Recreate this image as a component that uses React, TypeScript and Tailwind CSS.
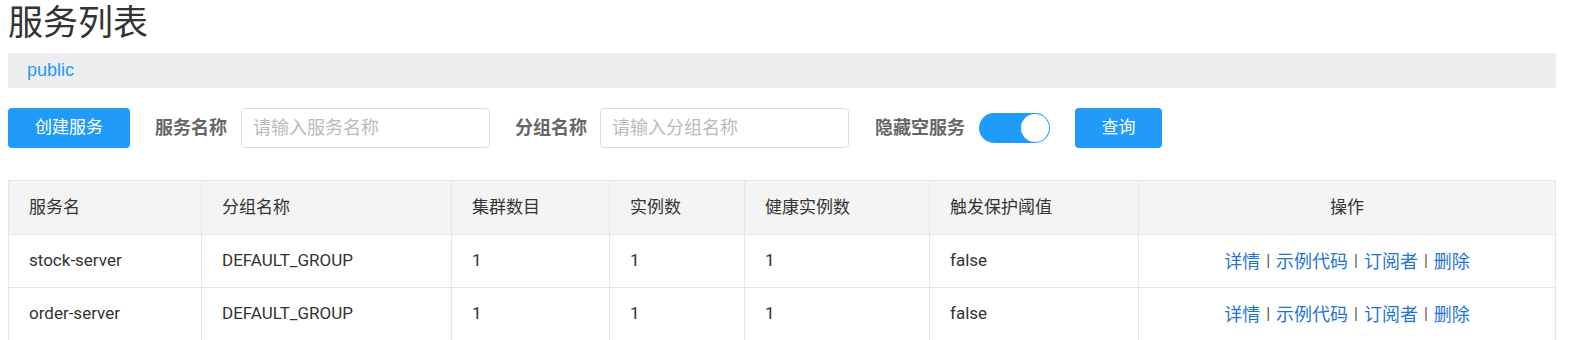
import React from "react";

const cjk = { fontFamily: '"Liberation Sans", "Noto Sans CJK SC", sans-serif' };
const cell = { fontFamily: 'Roboto, "Noto Sans CJK SC", sans-serif' };

const rows = [
    { name: "stock-server", group: "DEFAULT_GROUP", clusters: "1", instances: "1", healthy: "1", threshold: "false" },
    { name: "order-server", group: "DEFAULT_GROUP", clusters: "1", instances: "1", healthy: "1", threshold: "false" },
];

const cols = ["服务名", "分组名称", "集群数目", "实例数", "健康实例数", "触发保护阈值"];
const widths = ["w-[193px]", "w-[250px]", "w-[158px]", "w-[135px]", "w-[185px]", "w-[209px]", "w-[417px]"];

function Actions() {
    const links = ["详情", "示例代码", "订阅者", "删除"];
    return <div className="flex justify-center items-center text-[18px]">
        {links.map((l, i) => (
            <span key={l} className="flex items-center">
                {i > 0 && <span className="px-[6px] text-[#555] text-[16px]">|</span>}
                <a className="text-[#1f75d6] cursor-pointer">{l}</a>
            </span>
        ))}
    </div>
}

export default function App() {
    return <div className="px-2 bg-white text-[#333]" style={cjk}>
        <h1 className="text-[35px] leading-[44px] font-normal pt-[1px] mb-[8px]">服务列表</h1>
        <div className="w-[1548px] h-[35px] bg-[#eee] flex items-center pl-[19px] text-[18px] text-[#209bfa]">
            <span>public</span>
        </div>

        <div className="mt-[20px] h-10 flex items-center">
            <button className="h-10 w-[122px] rounded bg-[#209bfa] text-white text-[17px]">创建服务</button>
            <span className="ml-[25px] font-bold text-[18px] text-[#666]">服务名称</span>
            <input
                className="ml-[14px] h-10 w-[249px] rounded border border-[#ddd] px-[11px] text-[18px] outline-none placeholder:text-[#bbb]"
                placeholder="请输入服务名称"></input>
            <span className="ml-[25px] font-bold text-[18px] text-[#666]">分组名称</span>
            <input
                className="ml-[13px] h-10 w-[249px] rounded border border-[#ddd] px-[11px] text-[18px] outline-none placeholder:text-[#bbb]"
                placeholder="请输入分组名称"></input>
            <span className="ml-[26px] font-bold text-[18px] text-[#666]">隐藏空服务</span>
            <div className="ml-[14px] w-[71px] h-[30px] rounded-full bg-[#209bfa] flex items-center justify-end pr-[1px]">
                <div className="w-[28px] h-[28px] rounded-full bg-white"></div>
            </div>
            <button className="ml-[25px] h-10 w-[87px] rounded bg-[#209bfa] text-white text-[17px]">查询</button>
        </div>

        <table className="mt-[32px] w-[1548px] table-fixed border-collapse text-[17px]" style={cell}>
            <thead>
                <tr className="bg-[#f4f4f4] h-[54px]">
                    {cols.map((c, i) => (
                        <th key={c} className={`${widths[i]} border border-[#e6e6e6] text-left font-normal pl-[20px]`}>{c}</th>
                    ))}
                    <th className={`${widths[6]} border border-[#e6e6e6] text-center font-normal`}>操作</th>
                </tr>
            </thead>
            <tbody>
                {rows.map(r => (
                    <tr key={r.name} className="h-[53px]">
                        <td className="border border-[#e6e6e6] pl-[20px]">{r.name}</td>
                        <td className="border border-[#e6e6e6] pl-[20px]">{r.group}</td>
                        <td className="border border-[#e6e6e6] pl-[20px]">{r.clusters}</td>
                        <td className="border border-[#e6e6e6] pl-[20px]">{r.instances}</td>
                        <td className="border border-[#e6e6e6] pl-[20px]">{r.healthy}</td>
                        <td className="border border-[#e6e6e6] pl-[20px]">{r.threshold}</td>
                        <td className="border border-[#e6e6e6]"><Actions /></td>
                    </tr>
                ))}
            </tbody>
        </table>
    </div>
}
